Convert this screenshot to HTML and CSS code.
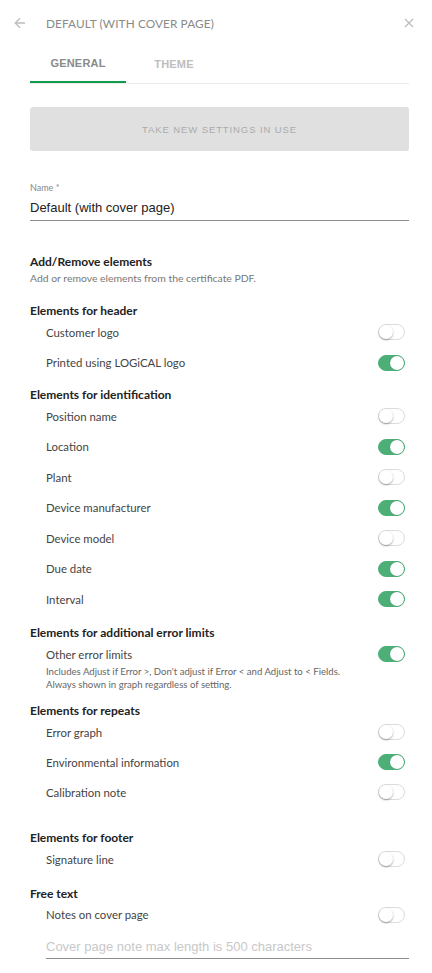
FILE: index.html
```html
<!DOCTYPE html>
<html lang="en">
<head>
<meta charset="utf-8">
<title>Default (with cover page)</title>
<link rel="stylesheet" href="styles.css">
</head>
<body>
<div class="panel">
  <header class="topbar">
    <span class="back">
      <svg width="12" height="12" viewBox="0 0 12 12"><path d="M11 6H1.5M6 1.2L1.2 6 6 10.8" fill="none" stroke="#bdbdbd" stroke-width="1.3"/></svg>
    </span>
    <span class="title">DEFAULT (WITH COVER PAGE)</span>
    <span class="close">
      <svg width="10" height="10" viewBox="0 0 10 10"><path d="M1 1L9 9M9 1L1 9" stroke="#bdbdbd" stroke-width="1.3"/></svg>
    </span>
  </header>

  <div class="content">
    <nav class="tabs">
      <div class="tab active">GENERAL</div>
      <div class="tab">THEME</div>
    </nav>

    <button class="apply" disabled>TAKE NEW SETTINGS IN USE</button>

    <div class="field">
      <div class="field-label">Name *</div>
      <div class="field-value">Default (with cover page)</div>
    </div>

    <div class="intro">
      <div class="heading">Add/Remove elements</div>
      <div class="sub">Add or remove elements from the certificate PDF.</div>
    </div>

    <section class="group g-header">
      <div class="heading">Elements for header</div>
      <div class="row"><span>Customer logo</span><i class="toggle"></i></div>
      <div class="row"><span>Printed using LOGiCAL logo</span><i class="toggle on"></i></div>
    </section>

    <section class="group g-ident">
      <div class="heading">Elements for identification</div>
      <div class="row"><span>Position name</span><i class="toggle"></i></div>
      <div class="row"><span>Location</span><i class="toggle on"></i></div>
      <div class="row"><span>Plant</span><i class="toggle"></i></div>
      <div class="row"><span>Device manufacturer</span><i class="toggle on"></i></div>
      <div class="row"><span>Device model</span><i class="toggle"></i></div>
      <div class="row"><span>Due date</span><i class="toggle on"></i></div>
      <div class="row"><span>Interval</span><i class="toggle on"></i></div>
    </section>

    <section class="group g-limits">
      <div class="heading">Elements for additional error limits</div>
      <div class="row"><span>Other error limits</span><i class="toggle on"></i></div>
      <div class="note">Includes Adjust if Error &gt;, Don't adjust if Error &lt; and Adjust to &lt; Fields.<br>Always shown in graph regardless of setting.</div>
    </section>

    <section class="group g-repeats">
      <div class="heading">Elements for repeats</div>
      <div class="row"><span>Error graph</span><i class="toggle"></i></div>
      <div class="row"><span>Environmental information</span><i class="toggle on"></i></div>
      <div class="row"><span>Calibration note</span><i class="toggle"></i></div>
    </section>

    <section class="group g-footer">
      <div class="heading">Elements for footer</div>
      <div class="row"><span>Signature line</span><i class="toggle"></i></div>
    </section>

    <section class="group g-free">
      <div class="heading">Free text</div>
      <div class="row"><span>Notes on cover page</span><i class="toggle"></i></div>
      <div class="note-input">Cover page note max length is 500 characters</div>
    </section>
  </div>
</div>
</body>
</html>
```

FILE: styles.css
```css
* { box-sizing: border-box; }

html, body {
  margin: 0;
  padding: 0;
  background: #ffffff;
}

body {
  font-family: Lato, "Noto Sans", sans-serif;
  color: #333;
}

.panel {
  width: 432px;
  min-height: 973px;
}

.topbar {
  height: 46px;
  display: flex;
  align-items: center;
  padding: 0 18px 0 14px;
}

.back {
  width: 12px;
  height: 12px;
  display: flex;
  margin-right: 20px;
}

.title {
  flex: 1;
  font-size: 11.8px;
  color: #8a8a8a;
  letter-spacing: 0.1px;
}

.close {
  width: 10px;
  height: 10px;
  display: flex;
}

.content {
  padding: 0 23px 0 30px;
}

.tabs {
  display: flex;
  height: 38px;
  border-bottom: 1px solid #ebebeb;
}

.tab {
  width: 96px;
  display: flex;
  align-items: center;
  justify-content: center;
  font-family: "Liberation Sans", Arial, sans-serif;
  font-weight: bold;
  font-size: 11px;
  color: #bdbdbd;
  padding-bottom: 1px;
  letter-spacing: 0.2px;
}

.tab.active {
  color: #8a8a8a;
  border-bottom: 2px solid #109a4b;
}

.apply {
  display: block;
  width: 100%;
  height: 44px;
  margin-top: 23px;
  border: none;
  border-radius: 3px;
  background: #e0e0e0;
  color: #ababab;
  font-family: "Liberation Sans", Arial, sans-serif;
  font-size: 9.5px;
  letter-spacing: 0.9px;
  padding: 0;
}

.field {
  margin-top: 31px;
  border-bottom: 1px solid #8c8c8c;
  padding-bottom: 2px;
}

.field-label {
  font-size: 9px;
  line-height: 12px;
  color: #888;
}

.field-value {
  font-family: "Liberation Sans", Arial, sans-serif;
  font-size: 13px;
  line-height: 21px;
  color: #222;
  margin-top: 3px;
}

.intro {
  margin-top: 35px;
}

.heading {
  font-weight: bold;
  font-size: 12px;
  line-height: 12px;
  color: #222;
}

.sub {
  font-size: 10.4px;
  line-height: 12px;
  color: #777;
  margin-top: 4px;
}

.group {
  margin-top: 11px;
}

.g-header { margin-top: 21px; }
.g-limits { margin-top: 12px; }
.g-limits .row { height: 31.5px; }
.g-repeats { margin-top: 14px; }
.g-repeats .row { height: 30px; }
.g-footer { margin-top: 25px; }
.g-free { margin-top: 13px; }

.row {
  height: 30.5px;
  display: flex;
  align-items: center;
  justify-content: space-between;
  padding-left: 16px;
  padding-right: 4px;
  font-size: 11.4px;
  color: #444;
}

.toggle {
  position: relative;
  width: 27px;
  height: 16px;
  border-radius: 8px;
  background: #fff;
  border: 1px solid #dcdcdc;
  display: block;
}

.toggle::after {
  content: "";
  position: absolute;
  top: 0;
  left: 0;
  width: 14px;
  height: 14px;
  border-radius: 50%;
  background: #fff;
  box-shadow: 0 1px 2px rgba(0, 0, 0, 0.35);
}

.toggle.on {
  background: #4caf78;
  border-color: #4caf78;
}

.toggle.on::after {
  left: auto;
  right: 0;
  box-shadow: 0 0 1px rgba(0, 0, 0, 0.3);
}

.note {
  padding-left: 16px;
  margin-top: -5px;
  font-size: 9.6px;
  line-height: 13px;
  color: #666;
}

.note-input {
  margin-left: 16px;
  margin-top: 6px;
  font-family: "Liberation Sans", Arial, sans-serif;
  font-size: 13px;
  line-height: 22px;
  color: #c8c8c8;
  border-bottom: 1px solid #8c8c8c;
}
```
